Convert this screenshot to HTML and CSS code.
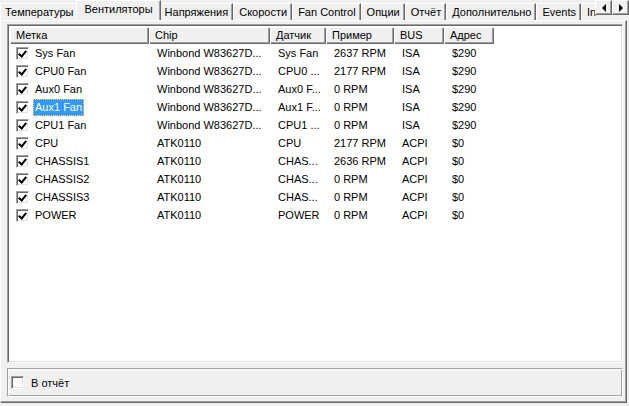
FILE: index.html
```html
<!DOCTYPE html>
<html lang="ru">
<head>
    <meta charset="UTF-8">
    <title>Вентиляторы</title>
    <link rel="stylesheet" href="styles.css">
</head>
<body>
<div class="window">
    <div class="tabs">
        <div class="tab first">Температуры</div>
        <div class="tab active">Вентиляторы</div>
        <div class="tab">Напряжения</div>
        <div class="tab">Скорости</div>
        <div class="tab">Fan Control</div>
        <div class="tab">Опции</div>
        <div class="tab">Отчёт</div>
        <div class="tab">Дополнительно</div>
        <div class="tab">Events</div>
        <div class="tab cut">In</div>
        <div class="tab-arrows">
            <div class="arrow-btn"><span class="tri left"></span></div>
            <div class="arrow-btn"><span class="tri right"></span></div>
        </div>
    </div>

    <div class="page">
        <div class="list">
            <div class="head">
                <div class="hcell">Метка</div>
                <div class="hcell">Chip</div>
                <div class="hcell">Датчик</div>
                <div class="hcell">Пример</div>
                <div class="hcell">BUS</div>
                <div class="hcell">Адрес</div>
            </div>
            <div class="rows">
                <div class="row">
                    <div class="cell first"><span class="check on"></span><span class="label">Sys Fan</span></div>
                    <div class="cell">Winbond W83627D...</div>
                    <div class="cell">Sys Fan</div>
                    <div class="cell">2637 RPM</div>
                    <div class="cell">ISA</div>
                    <div class="cell">$290</div>
                </div>
                <div class="row">
                    <div class="cell first"><span class="check on"></span><span class="label">CPU0 Fan</span></div>
                    <div class="cell">Winbond W83627D...</div>
                    <div class="cell">CPU0 ...</div>
                    <div class="cell">2177 RPM</div>
                    <div class="cell">ISA</div>
                    <div class="cell">$290</div>
                </div>
                <div class="row">
                    <div class="cell first"><span class="check on"></span><span class="label">Aux0 Fan</span></div>
                    <div class="cell">Winbond W83627D...</div>
                    <div class="cell">Aux0 F...</div>
                    <div class="cell">0 RPM</div>
                    <div class="cell">ISA</div>
                    <div class="cell">$290</div>
                </div>
                <div class="row">
                    <div class="cell first"><span class="check on"></span><span class="label selected">Aux1 Fan</span></div>
                    <div class="cell">Winbond W83627D...</div>
                    <div class="cell">Aux1 F...</div>
                    <div class="cell">0 RPM</div>
                    <div class="cell">ISA</div>
                    <div class="cell">$290</div>
                </div>
                <div class="row">
                    <div class="cell first"><span class="check on"></span><span class="label">CPU1 Fan</span></div>
                    <div class="cell">Winbond W83627D...</div>
                    <div class="cell">CPU1 ...</div>
                    <div class="cell">0 RPM</div>
                    <div class="cell">ISA</div>
                    <div class="cell">$290</div>
                </div>
                <div class="row">
                    <div class="cell first"><span class="check on"></span><span class="label">CPU</span></div>
                    <div class="cell">ATK0110</div>
                    <div class="cell">CPU</div>
                    <div class="cell">2177 RPM</div>
                    <div class="cell">ACPI</div>
                    <div class="cell">$0</div>
                </div>
                <div class="row">
                    <div class="cell first"><span class="check on"></span><span class="label">CHASSIS1</span></div>
                    <div class="cell">ATK0110</div>
                    <div class="cell">CHAS...</div>
                    <div class="cell">2636 RPM</div>
                    <div class="cell">ACPI</div>
                    <div class="cell">$0</div>
                </div>
                <div class="row">
                    <div class="cell first"><span class="check on"></span><span class="label">CHASSIS2</span></div>
                    <div class="cell">ATK0110</div>
                    <div class="cell">CHAS...</div>
                    <div class="cell">0 RPM</div>
                    <div class="cell">ACPI</div>
                    <div class="cell">$0</div>
                </div>
                <div class="row">
                    <div class="cell first"><span class="check on"></span><span class="label">CHASSIS3</span></div>
                    <div class="cell">ATK0110</div>
                    <div class="cell">CHAS...</div>
                    <div class="cell">0 RPM</div>
                    <div class="cell">ACPI</div>
                    <div class="cell">$0</div>
                </div>
                <div class="row">
                    <div class="cell first"><span class="check on"></span><span class="label">POWER</span></div>
                    <div class="cell">ATK0110</div>
                    <div class="cell">POWER</div>
                    <div class="cell">0 RPM</div>
                    <div class="cell">ACPI</div>
                    <div class="cell">$0</div>
                </div>
            </div>
        </div>

        <div class="group">
            <span class="check"></span>
            <span class="group-label">В отчёт</span>
        </div>
    </div>
</div>
</body>
</html>
```

FILE: styles.css
```css
/* Classic Windows look */
body {
    margin: 0;
    background: #f0f0f0;
    font-family: "Liberation Sans", Arial, sans-serif;
    font-size: 11px;
    color: #000;
    overflow: hidden;
}

.window {
    width: 629px;
    height: 406px;
}

/* Tab strip */
.tabs {
    display: flex;
    align-items: flex-end;
    height: 20px;
    position: relative;
}

.tab {
    height: 17px;
    line-height: 16px;
    padding: 0 4px 0 5px;
    box-sizing: border-box;
    border-top: 1px solid #fff;
    border-left: 1px solid #fff;
    border-right: 1px solid #696969;
    box-shadow: inset -1px 0 #a0a0a0;
    white-space: nowrap;
}

.tab.first {
    padding-left: 4px;
}

.tab.active {
    height: 20px;
    line-height: 17px;
    margin: 0 -2px;
    padding: 0 7px;
    position: relative;
    z-index: 2;
    background: #f0f0f0;
}

.tab.cut {
    width: 16px;
    overflow: hidden;
    padding-right: 0;
    border-right: none;
    box-shadow: none;
}

.tab-arrows {
    position: absolute;
    right: 0;
    top: 0;
    display: flex;
}

.arrow-btn {
    width: 17px;
    height: 15px;
    box-sizing: border-box;
    background: #f0f0f0;
    border-top: 1px solid #fff;
    border-left: 1px solid #fff;
    border-right: 1px solid #696969;
    border-bottom: 1px solid #696969;
    box-shadow: inset -1px -1px #a0a0a0;
    display: flex;
    align-items: center;
    justify-content: center;
}

.tri {
    width: 0;
    height: 0;
    border-top: 4px solid transparent;
    border-bottom: 4px solid transparent;
}

.tri.left {
    border-right: 4px solid #000;
}

.tri.right {
    border-left: 4px solid #000;
}

/* Tab page */
.page {
    height: 383px;
    margin-right: 2px;
    box-sizing: border-box;
    border-top: 1px solid #fff;
    border-left: 1px solid #fff;
    border-right: 1px solid #696969;
    border-bottom: 1px solid #696969;
    box-shadow: inset -1px -1px #a0a0a0;
    padding: 3px 3px 0 6px;
    display: flex;
    flex-direction: column;
}

/* List view */
.list {
    height: 339px;
    box-sizing: border-box;
    background: #fff;
    border-top: 1px solid #a0a0a0;
    border-left: 1px solid #a0a0a0;
    border-right: 1px solid #fff;
    border-bottom: 1px solid #fff;
    box-shadow: inset 1px 1px #696969, inset -1px -1px #e3e3e3;
    padding: 2px 2px 0 2px;
    overflow: hidden;
}

.head,
.row {
    display: grid;
    grid-template-columns: 139px 121px 56px 68px 50px 50px;
}

.head {
    height: 17px;
}

.hcell {
    background: #f0f0f0;
    box-shadow: inset 1px 1px #fff, inset -1px -1px #696969, inset -2px -2px #a0a0a0;
    line-height: 16px;
    padding-left: 6px;
    white-space: nowrap;
}

.row {
    height: 18px;
    line-height: 18px;
}

.cell {
    padding-left: 8px;
    white-space: nowrap;
    overflow: hidden;
}

.cell.first {
    padding-left: 6px;
    display: flex;
    align-items: center;
}

.label {
    margin-left: 4px;
    padding: 0 2px;
    line-height: 17px;
}

.label.selected {
    background: #3399ff;
    color: #fff;
    outline: 1px dotted #ffcc66;
    outline-offset: -1px;
}

/* Checkbox */
.check {
    width: 13px;
    height: 13px;
    box-sizing: border-box;
    background: #fff;
    border-top: 1px solid #a0a0a0;
    border-left: 1px solid #a0a0a0;
    border-right: 1px solid #fff;
    border-bottom: 1px solid #fff;
    box-shadow: inset 1px 1px #696969, inset -1px -1px #e3e3e3;
    position: relative;
    flex-shrink: 0;
}

.check.on::after {
    content: "";
    position: absolute;
    left: 3px;
    top: 1px;
    width: 3px;
    height: 6px;
    border-right: 2px solid #000;
    border-bottom: 2px solid #000;
    transform: rotate(40deg);
}

/* Bottom group box */
.group {
    margin-top: 5px;
    height: 29px;
    box-sizing: border-box;
    border-top: 1px solid #a0a0a0;
    border-left: 1px solid #a0a0a0;
    border-right: 1px solid #fff;
    border-bottom: 1px solid #fff;
    box-shadow: inset 1px 1px #fff, inset -1px -1px #a0a0a0;
    display: flex;
    align-items: center;
    padding-left: 3px;
}

.group-label {
    margin-left: 7px;
}
```
